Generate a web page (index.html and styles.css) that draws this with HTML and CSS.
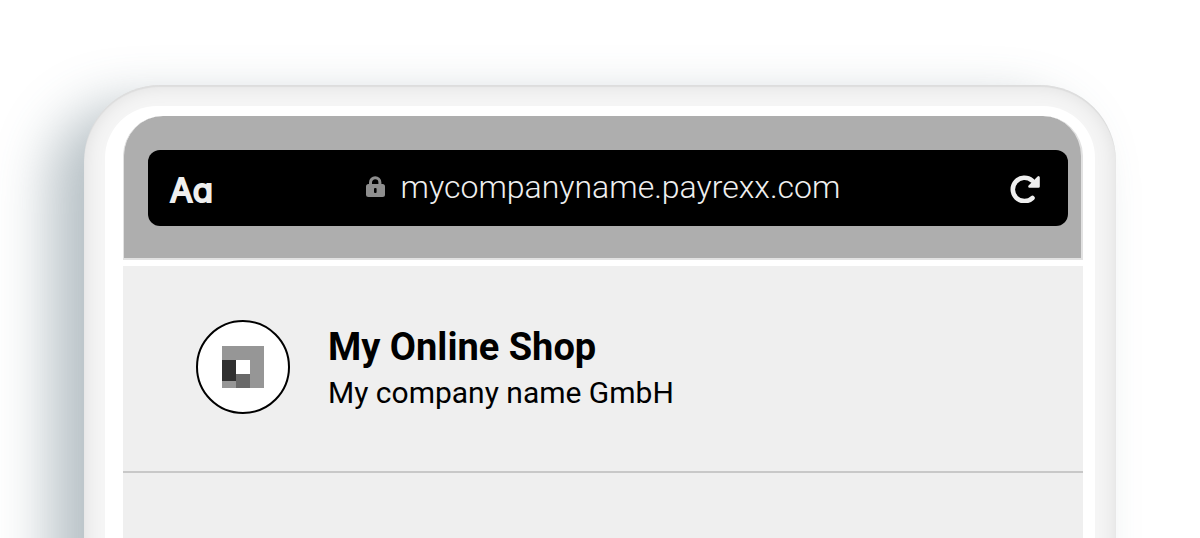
FILE: index.html
```html
<!DOCTYPE html>
<html lang="en">
<head>
    <meta charset="UTF-8">
    <meta name="viewport" content="width=device-width, initial-scale=1.0">
    <title>My Online Shop</title>
    <link rel="stylesheet" href="styles.css">
</head>
<body>
    <div class="phone">
        <div class="bezel">
            <!-- Browser bar -->
            <header class="browser">
                <div class="address-bar">
                    <button class="text-size" type="button">Aa</button>
                    <label class="address">
                        <svg class="lock" viewBox="0 0 20 22" role="img" aria-label="Website address">
                            <path d="M5.500 9V6.500a4.700 4.700 0 0 1 9.400 0V9" fill="none" stroke="#8e8e8e" stroke-width="3"/>
                            <rect x="1" y="8" width="19" height="13" rx="2.500" fill="#8e8e8e"/>
                            <rect x="9" y="12" width="2.600" height="5" rx="1" fill="#000"/>
                        </svg>
                        <input class="url" type="text" size="22" value="mycompanyname.payrexx.com" readonly>
                    </label>
                    <button class="reload" type="button" aria-label="Reload">
                        <svg viewBox="0 0 30 30">
                            <path d="M22.500 25A11.700 11.700 0 1 1 22 7.500" fill="none" stroke="#efefef" stroke-width="4.600" stroke-linecap="round"/>
                            <path d="M28.500 4.500V13.500H19.500Z" fill="#efefef" stroke="#efefef" stroke-width="2.600" stroke-linejoin="round"/>
                        </svg>
                    </button>
                </div>
            </header>

            <!-- Shop page -->
            <main class="page">
                <section class="shop">
                    <div class="logo">
                        <svg viewBox="0 0 42 42">
                            <rect width="42" height="42" fill="#969696"/>
                            <rect x="14" y="14" width="14" height="14" fill="#fff"/>
                            <rect y="14" width="14" height="21" fill="#303030"/>
                            <rect x="14" y="28" width="14" height="14" fill="#696969"/>
                        </svg>
                    </div>
                    <div class="shop-info">
                        <h1>My Online Shop</h1>
                        <p>My company name GmbH</p>
                    </div>
                </section>
            </main>
        </div>
    </div>
</body>
</html>
```
FILE: styles.css
```css
* {
    box-sizing: border-box;
}

body {
    margin: 0;
    padding: 85px 84px 0;
    height: 100vh;
    overflow: hidden;
    display: flex;
    background: #fff;
    font-family: Roboto, sans-serif;
    color: #000;
}

/* Phone frame, runs on below the fold */
.phone {
    flex: 1;
    display: flex;
    margin-bottom: -120px;
    padding: 21px 21px 0;
    background: #f5f5f5;
    border-radius: 76px 76px 0 0;
    box-shadow:
        inset 0 2px 1px rgba(0, 0, 0, 0.05),
        inset 0 0 20px rgba(0, 0, 0, 0.1),
        -34px 20px 54px rgba(75, 100, 112, 0.4);
}

.bezel {
    flex: 1;
    display: flex;
    flex-direction: column;
    gap: 6px;
    padding: 10px 12px 0 18px;
    background: #fff;
    border-radius: 52px 52px 0 0;
}

/* Browser bar */
.browser {
    padding: 34px 13px 32px 24px;
    background: #aeaeae;
    border: solid #e2e2e2;
    border-width: 0 2px 2px 1px;
    border-radius: 40px 40px 0 0;
}

.address-bar {
    display: flex;
    align-items: center;
    justify-content: space-between;
    height: 76px;
    padding: 0 28px 0 22px;
    background: #000;
    border-radius: 12px;
}

button {
    padding: 0;
    border: none;
    background: none;
    cursor: pointer;
}

.text-size {
    padding-top: 4px;
    font-family: Inter, sans-serif;
    font-size: 33px;
    font-weight: 400;
    font-feature-settings: "cv11";
    line-height: 40px;
    color: #efefef;
    -webkit-text-stroke: 2px #efefef;
}

.reload svg {
    display: block;
    width: 30px;
    height: 30px;
}

.address {
    display: flex;
    align-items: center;
    gap: 16px;
    padding: 0 18px 2px 0;
}

.lock {
    width: 20px;
    height: 22px;
}

.url {
    field-sizing: content;
    padding: 0;
    border: none;
    outline: none;
    background: none;
    font-family: Roboto, sans-serif;
    font-size: 32px;
    font-weight: 300;
    color: #efefef;
}

/* Shop page */
.page {
    flex: 1;
    background: #efefef;
}

.shop {
    display: flex;
    align-items: center;
    gap: 38px;
    padding: 53px 73px 56px;
    border-bottom: 2px solid #c8c8c8;
}

.logo {
    display: flex;
    align-items: center;
    justify-content: center;
    width: 94px;
    height: 94px;
    background: #fff;
    border: 2px solid #000;
    border-radius: 50%;
}

.logo svg {
    width: 42px;
    height: 42px;
}

.shop-info {
    padding-top: 4px;
}

h1 {
    margin: 0;
    font-size: 38px;
    font-weight: 700;
    line-height: 48px;
}

p {
    margin: 0;
    font-size: 30px;
    line-height: 44px;
}
```
